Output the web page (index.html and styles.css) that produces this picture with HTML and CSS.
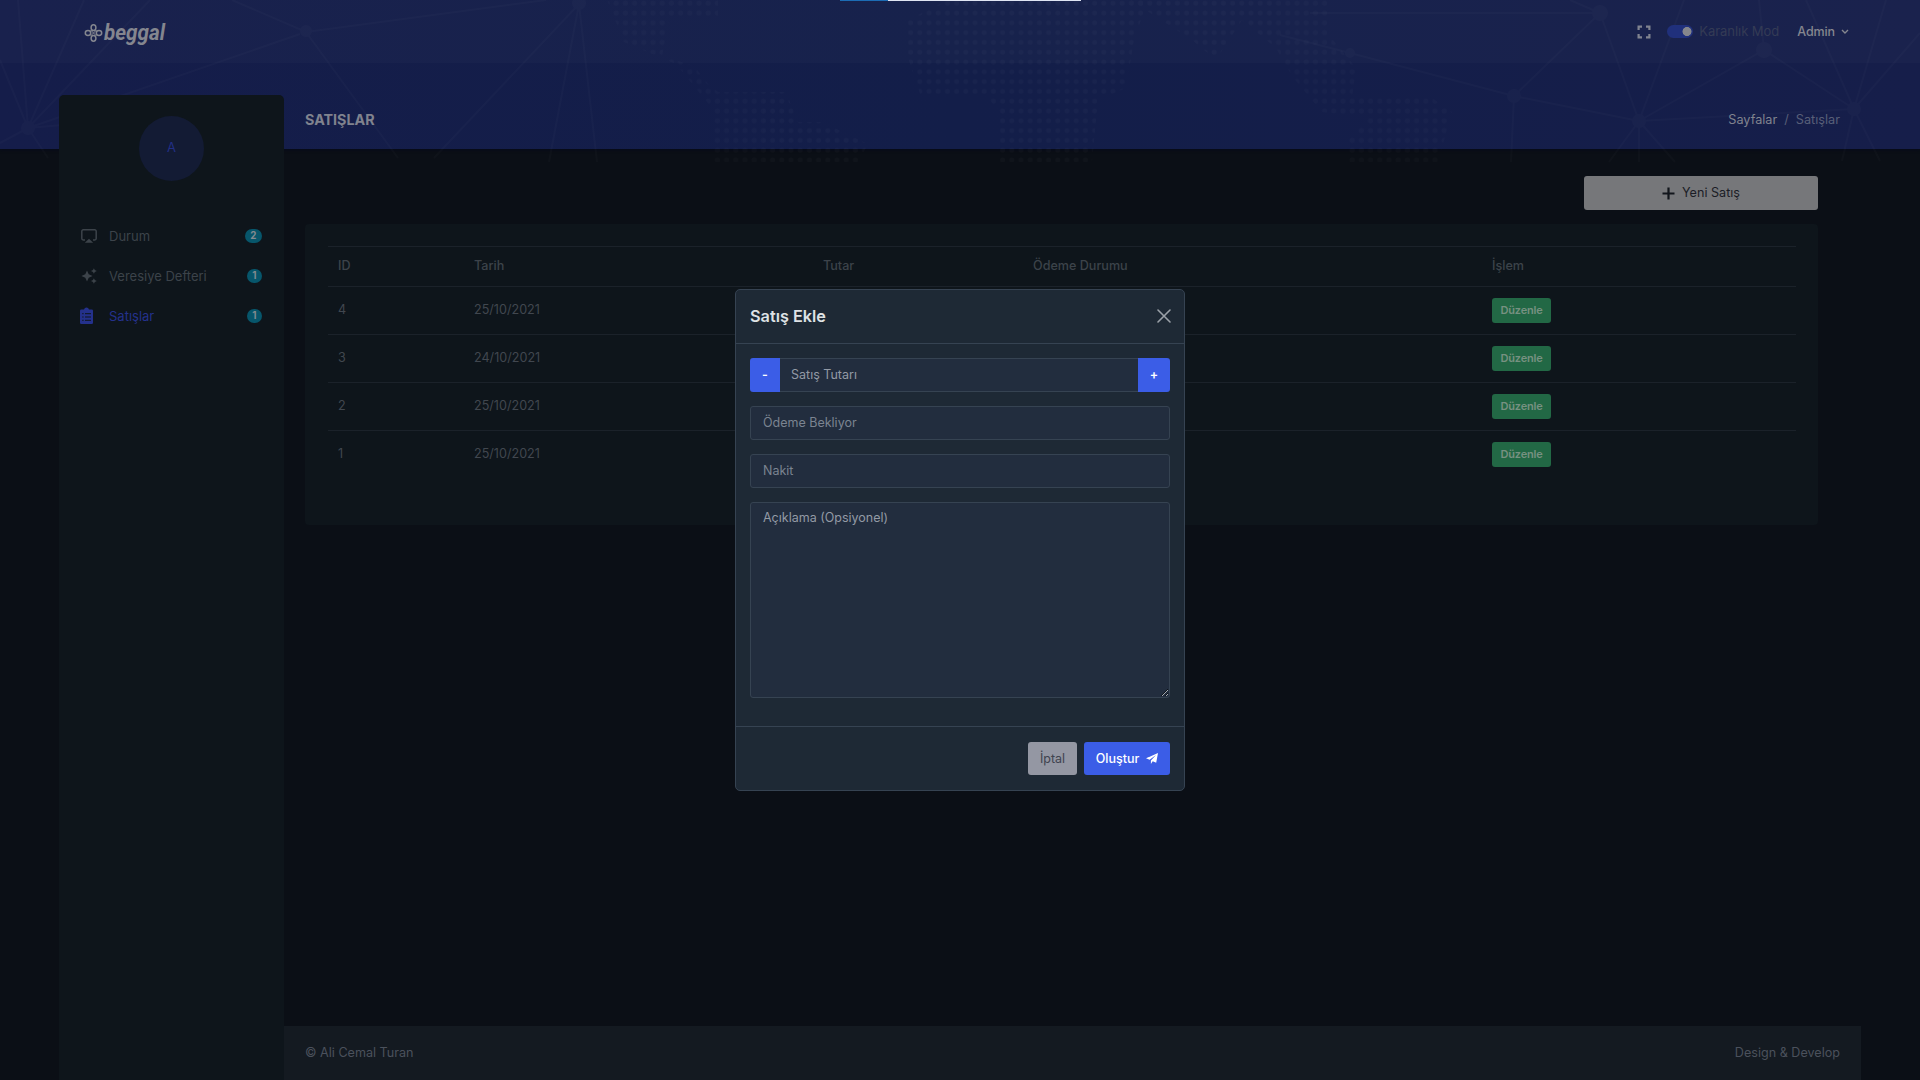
FILE: index.html
```html
<!DOCTYPE html>
<html lang="tr">
<head>
  <meta charset="UTF-8" />
  <meta name="viewport" content="width=device-width, initial-scale=1.0"/>
  <title>Beggal - Satışlar</title>
  <link rel="stylesheet" href="styles.css">
</head>
<body>
  <!-- Banner background -->
  <div class="banner">
    <svg class="banner-art" width="1920" height="163" viewBox="0 0 1920 163">
      <defs>
        <pattern id="dots" x="5" y="8" width="9.2" height="9.8" patternUnits="userSpaceOnUse">
          <circle cx="4" cy="5" r="2.6" fill="#fff"/>
        </pattern>
      </defs>
      <g fill="url(#dots)" opacity="0.018">
        <path d="M608 0h110v16h-48l-8 40 32 10 14 18 10 8h68l12 30h24l46 22-10 18h-146v-54l-36-44-52-22-16-40z"/>
        <path d="M908 20l40-20h200l-14 40-8 48-28 12-6 62h-92v-50l-16-18h-64l-12-36z"/>
        <path d="M1130 0h200l-2 34 28 34-4 30h80l20 14-14 50h-90v-22l20-22-46-6-30-36-16-28-34-28-26 40-24-20z"/>
      </g>
      <g class="net">
        <path d="M28 128L18 0M28 128L0 60M28 128L84 0M28 128L150 0M28 128L0 143M28 128L48 158M28 128l92-8M28 128L300 34M232 0l74 32 240-32M306 32l92 126M579 4L434 158M579 4l-30 158M579 4l18 158M1280 35l70 18 164 43 125 25 215-12M1310 13h290L1514 96l-3 66M1600 13l39 108 45-121M1639 121l125-71 90 59M1764 50l-5-50M1639 121l-30 41M1639 121v41M1639 121l36 41M1854 109l32-109M1854 109l66-76M1854 109l-48-109M1854 109l-12 52M1854 109l26 52M1600 13l-30-13"/>
        <circle cx="28" cy="128" r="6"/>
        <circle cx="306" cy="31" r="5"/>
        <circle cx="579" cy="3" r="6"/>
        <circle cx="1350" cy="53" r="4"/>
        <circle cx="1514" cy="96" r="6"/>
        <circle cx="1600" cy="13" r="7"/>
        <circle cx="1639" cy="121" r="6"/>
        <circle cx="1764" cy="50" r="7"/>
        <circle cx="1854" cy="109" r="6"/>
      </g>
    </svg>
  </div>
  <div class="progress"></div>

  <!-- Navbar -->
  <header class="navbar">
    <a href="#" class="logo">
      <svg width="90" height="36" viewBox="0 0 90 36">
        <g fill="none" stroke="#84868f" stroke-width="1.500">
          <ellipse cx="9.500" cy="13.700" rx="2.400" ry="2.900"/>
          <ellipse cx="9.500" cy="24.300" rx="2.400" ry="2.900"/>
          <ellipse cx="4" cy="19" rx="2.700" ry="2.400"/>
          <ellipse cx="15" cy="19" rx="2.700" ry="2.400"/>
          <path d="M6.500 16l6 6M12.500 16l-6 6" stroke-width="1"/>
        </g>
        <text x="20" y="26" textLength="61" lengthAdjust="spacingAndGlyphs" class="logo-text">beggal</text>
      </svg>
    </a>
    <div class="nav-right">
      <svg class="expand" width="14" height="14" viewBox="0 0 14 14" fill="none" stroke="#808390" stroke-width="2.200"><path d="M1.600 5V1.600H5M9 1.600h3.400V5M12.400 9v3.400H9M5 12.400H1.600V9"/></svg>
      <span class="switch"></span>
      <span class="mode">Karanlık Mod</span>
      <a href="#" class="user">Admin
        <svg width="8" height="6" viewBox="0 0 8 6" fill="none" stroke="#85878f" stroke-width="1.400"><path d="M1 1l3 3 3-3"/></svg>
      </a>
    </div>
  </header>

  <div class="layout">
    <!-- Sidebar -->
    <aside class="sidebar">
      <div class="avatar">A</div>
      <ul class="menu">
        <li>
          <svg width="16" height="16" viewBox="0 0 16 16"><path d="M4 12H2.200A1.400 1.400 0 0 1 .8 10.600V3.200a1.400 1.400 0 0 1 1.400-1.400h11.600a1.400 1.400 0 0 1 1.400 1.400v7.400a1.400 1.400 0 0 1-1.400 1.400H12" fill="none" stroke="currentColor" stroke-width="1.500"/><path d="M8 10.800l4.200 4H3.800z" fill="currentColor"/></svg>
          <a href="#">Durum</a><span class="badge">2</span>
        </li>
        <li>
          <svg width="16" height="16" viewBox="0 0 16 16" fill="currentColor"><path d="M6 2.600l1.700 3.700L11.600 8 7.700 9.700 6 13.400 4.300 9.700.4 8l3.900-1.700zM12.900.2l.9 1.900 2 .9-2 .9-.9 1.900-.9-1.900-2-.9 2-.9zM12.900 10.200l.9 1.900 2 .9-2 .9-.9 1.900-.9-1.900-2-.9 2-.9z"/></svg>
          <a href="#">Veresiye Defteri</a><span class="badge">1</span>
        </li>
        <li class="active">
          <svg width="16" height="18" viewBox="0 0 16 18"><path d="M1.300 2.400H4A2.600 2.600 0 0 1 9 2.400h2.700A1.300 1.300 0 0 1 13 3.700v12A1.300 1.300 0 0 1 11.700 17H1.300A1.300 1.300 0 0 1 0 15.700v-12a1.300 1.300 0 0 1 1.300-1.300z" fill="currentColor"/><path d="M2.200 6.700h1.400M5 6.700h6M2.200 10h1.400M5 10h6M2.200 13.300h1.400M5 13.300h6" stroke="#0e151b"/></svg>
          <a href="#">Satışlar</a><span class="badge">1</span>
        </li>
      </ul>
    </aside>

    <div class="page">
      <div class="page-title">
        <h1>SATIŞLAR</h1>
        <div class="breadcrumb"><a href="#">Sayfalar</a><i>/</i><span>Satışlar</span></div>
      </div>

      <main>
        <button class="new-sale">
          <svg width="13" height="13" viewBox="0 0 13 13" stroke="#12161c" stroke-width="2.200"><path d="M6.500.5v12M.5 6.500h12"/></svg>
          <span>Yeni Satış</span>
        </button>

        <section class="card">
          <table>
            <colgroup>
              <col class="col-id"><col class="col-date"><col class="col-total"><col class="col-status"><col>
            </colgroup>
            <thead>
              <tr><th>ID</th><th>Tarih</th><th>Tutar</th><th>Ödeme Durumu</th><th>İşlem</th></tr>
            </thead>
            <tbody>
              <tr><td>4</td><td>25/10/2021</td><td></td><td></td><td><button class="edit">Düzenle</button></td></tr>
              <tr><td>3</td><td>24/10/2021</td><td></td><td></td><td><button class="edit">Düzenle</button></td></tr>
              <tr><td>2</td><td>25/10/2021</td><td></td><td></td><td><button class="edit">Düzenle</button></td></tr>
              <tr><td>1</td><td>25/10/2021</td><td></td><td></td><td><button class="edit">Düzenle</button></td></tr>
            </tbody>
          </table>
        </section>
      </main>

      <footer>
        <span>© Ali Cemal Turan</span>
        <span>Design &amp; Develop</span>
      </footer>
    </div>
  </div>

  <!-- Add sale modal -->
  <div class="modal-wrap">
    <form class="modal">
      <div class="modal-header">
        <h2>Satış Ekle</h2>
        <svg width="14" height="14" viewBox="0 0 14 14" stroke="#9ba1a8" stroke-width="1.600" stroke-linecap="round"><path d="M1 1l12 12M13 1L1 13"/></svg>
      </div>
      <div class="modal-body">
        <div class="amount">
          <button type="button" class="minus">-</button>
          <input type="text" placeholder="Satış Tutarı">
          <button type="button" class="plus">+</button>
        </div>
        <div class="field">Ödeme Bekliyor</div>
        <div class="field">Nakit</div>
        <textarea placeholder="Açıklama (Opsiyonel)"></textarea>
      </div>
      <div class="modal-footer">
        <button type="button" class="cancel">İptal</button>
        <button type="button" class="submit">Oluştur
          <svg width="12" height="11" viewBox="0 0 12 11" fill="#fff"><path d="M12 0l-1.800 9.800-3.500-1.500L4.900 11V7.500L10 2 3.600 6.800 0 5.300z"/></svg>
        </button>
      </div>
    </form>
  </div>
</body>
</html>
```

FILE: styles.css
```css
* {
  margin: 0; padding: 0; box-sizing: border-box;
}

body {
  height: 1080px;
  overflow: hidden;
  background-color: #0b0f16;
  color: #41474f;
  font-family: Inter, "Noto Sans", sans-serif;
  font-size: 13px;
  line-height: 20px;
}

a {
  color: inherit;
  text-decoration: none;
}

button, input, textarea {
  font: inherit;
  border: none;
}

svg {
  flex-shrink: 0;
}

.banner {
  position: absolute;
  top: 0;
  left: 0;
  width: 100%;
  height: 149px;
  background: linear-gradient(90deg, #151d4a, #131e49 50%, #161e4a);
  box-shadow: 0 1px 3px #060a1b;
}

.banner-art {
  display: block;
}

.net {
  fill: #fff;
  stroke: #fff;
  stroke-width: 2;
  opacity: 0.014;
}

.net path {
  fill: none;
}

.progress {
  position: absolute;
  top: 0;
  left: 840px;
  width: 241px;
  height: 1px;
  background: linear-gradient(90deg, #1c6cb4 48px, #dfe5f3 48px);
  z-index: 2;
}

.navbar {
  position: relative;
  display: flex;
  justify-content: space-between;
  align-items: center;
  height: 63px;
  padding: 0 71px 0 84px;
  background-color: rgba(255, 255, 255, 0.02);
}

.logo svg {
  display: block;
}

.logo-text {
  font: italic 700 22px Roboto, sans-serif;
  fill: #84868f;
}

.nav-right {
  display: flex;
  align-items: center;
}

.switch {
  width: 26px;
  height: 13px;
  margin: 0 6px 0 16px;
  border-radius: 7px;
  background: radial-gradient(circle at 20px 6.5px, #85868c 4.2px, #20307c 4.800px);
}

.mode {
  color: #343b55;
  margin: -2px 18px 0 0;
  letter-spacing: -0.05px;
}

.user {
  display: flex;
  align-items: center;
  gap: 6px;
  color: #85878f;
  font-weight: 500;
  font-size: 12.500px;
  letter-spacing: -0.1px;
}

.layout {
  position: relative;
  display: flex;
  height: 1017px;
  padding: 0 59px;
}

.sidebar {
  width: 225px;
  margin-top: 32px;
  padding: 21px 22px;
  border-radius: 5px 5px 0 0;
  background-color: #0e151b;
}

.avatar {
  width: 65px;
  height: 65px;
  margin: 0 auto 35px;
  border-radius: 50%;
  background-color: #131b34;
  color: #222f85;
  line-height: 63px;
  text-align: center;
}

.menu {
  list-style: none;
}

.menu li {
  display: flex;
  align-items: center;
  height: 40px;
  color: #3c434a;
}

.menu a {
  margin-left: 12px;
}

.menu .active {
  color: #24318c;
}

.menu .active svg {
  margin: -1px 1px 0 -1px;
}

.badge {
  margin-left: auto;
  padding: 0 5.5px;
  border-radius: 7px;
  background-color: #07566b;
  color: #838b90;
  font-size: 9.750px;
  font-weight: 700;
  line-height: 14px;
}

.page {
  flex: 1;
  display: flex;
  flex-direction: column;
}

.page-title {
  display: flex;
  justify-content: space-between;
  align-items: center;
  height: 86px;
  padding: 28px 21px 0;
  color: #80838e;
}

.page-title h1 {
  font-size: 14.300px;
  font-weight: 700;
}

.breadcrumb {
  display: flex;
  gap: 7px;
  font-size: 12.700px;
}

.breadcrumb i,
.breadcrumb span {
  color: #585e78;
  font-style: normal;
}

main {
  flex: 1;
  display: flex;
  flex-direction: column;
  padding: 27px 43px 0 21px;
}

.new-sale {
  display: flex;
  justify-content: center;
  align-items: center;
  align-self: flex-end;
  gap: 7px;
  width: 234px;
  height: 34px;
  border-radius: 3px;
  background-color: #76777a;
  color: #1b1d26;
  font-size: 12.600px;
}

.new-sale svg {
  margin-top: 1px;
}

.new-sale span {
  padding-bottom: 1px;
}

.card {
  height: 301px;
  margin-top: 14px;
  padding: 22px 22px 0 23px;
  border-radius: 4px;
  background-color: #0e151b;
}

table {
  width: 100%;
  table-layout: fixed;
  border-collapse: collapse;
  font-size: 12.600px;
}

.col-id { width: 136px; }
.col-date { width: 349px; }
.col-total { width: 210px; }
.col-status { width: 459px; }

tr {
  height: 48px;
  border-top: 1px solid #1b222a;
}

thead tr {
  height: 40px;
}

th, td {
  padding: 0 10px 1px;
  text-align: left;
  font-weight: 400;
}

th {
  font-weight: 500;
  color: #3c434a;
}

.edit {
  display: block;
  width: 59px;
  height: 25px;
  padding-bottom: 1px;
  border-radius: 3px;
  background-color: #226845;
  color: #779181;
  font-size: 11px;
  font-weight: 600;
  letter-spacing: -0.2px;
}

footer {
  display: flex;
  justify-content: space-between;
  align-items: center;
  height: 54px;
  padding: 0 21px 1px;
  background-color: #141a21;
  color: #4b515c;
  font-size: 12.600px;
}

.modal-wrap {
  position: fixed;
  inset: 0;
  display: flex;
  justify-content: center;
  align-items: center;
}

.modal {
  width: 450px;
  height: 502px;
  border: 1px solid #364352;
  border-radius: 5px;
  background-color: #1e2935;
  font-size: 12.500px;
}

.modal-header {
  display: flex;
  justify-content: space-between;
  align-items: center;
  height: 54px;
  padding: 0 13px 1px 14px;
  border-bottom: 1px solid #364352;
}

.modal-header h2 {
  color: #dfe2e5;
  font-size: 16.250px;
  font-weight: 600;
}

.modal-body {
  display: flex;
  flex-direction: column;
  gap: 14px;
  height: 382px;
  padding: 14px;
}

.amount {
  display: flex;
  height: 34px;
}

.amount button {
  background-color: #3b5de7;
  color: #fff;
  font-weight: 600;
}

.amount .minus {
  width: 30px;
  border-radius: 3px 0 0 3px;
}

.amount .plus {
  width: 32px;
  border-radius: 0 3px 3px 0;
}

.amount input {
  flex: 1;
  min-width: 0;
  padding: 0 11px 1px;
  border: 1px solid #364352;
  border-width: 1px 0;
  background-color: #222d3e;
}

.field {
  height: 34px;
  padding: 6px 12px;
  border: 1px solid #364352;
  border-radius: 3px;
  background-color: #222d3e;
  color: #7b8491;
}

textarea {
  height: 196px;
  padding: 5px 12px;
  border: 1px solid #364352;
  border-radius: 3px;
  background-color: #222d3e;
}

input::placeholder,
textarea::placeholder {
  color: #939aa5;
}

.modal-footer {
  display: flex;
  justify-content: flex-end;
  gap: 7px;
  padding: 15px 14px;
  border-top: 1px solid #364352;
}

.modal-footer button {
  height: 33px;
  border-radius: 3px;
}

.cancel {
  width: 49px;
  background-color: #9497a3;
  color: #40434f;
}

.submit {
  display: flex;
  justify-content: center;
  align-items: center;
  gap: 7px;
  width: 86px;
  background-color: #3b5de7;
  color: #fff;
  font-weight: 500;
}
```
